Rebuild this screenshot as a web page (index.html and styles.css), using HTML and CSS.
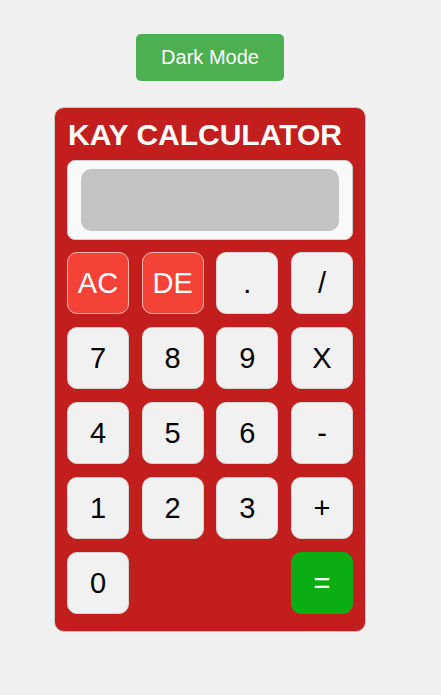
FILE: index.html
```html
<!DOCTYPE html>
<html>
<head>
<meta charset="utf-8">
<link rel="stylesheet" href="styles.css">
</head>
<body>
<div class="page">
  <button class="mode-btn">Dark Mode</button>
  <div class="calculator">
    <h1 class="title">KAY CALCULATOR</h1>
    <div class="display"><div class="screen"></div></div>
    <div class="keys">
      <button class="key key-red">AC</button>
      <button class="key key-red">DE</button>
      <button class="key">.</button>
      <button class="key">/</button>
      <button class="key">7</button>
      <button class="key">8</button>
      <button class="key">9</button>
      <button class="key">X</button>
      <button class="key">4</button>
      <button class="key">5</button>
      <button class="key">6</button>
      <button class="key">-</button>
      <button class="key">1</button>
      <button class="key">2</button>
      <button class="key">3</button>
      <button class="key">+</button>
      <button class="key">0</button>
      <button class="key key-eq">=</button>
    </div>
  </div>
</div>
</body>
</html>
```

FILE: styles.css
```css
html, body {
  margin: 0;
  padding: 0;
  background: #f0f0f0;
  font-family: "Liberation Sans", Arial, sans-serif;
}
.page {
  width: 420px;
  display: flex;
  flex-direction: column;
  align-items: center;
  padding-top: 34px;
}
.mode-btn {
  background: #4caf50;
  color: #fff;
  border: none;
  border-radius: 5px;
  font-family: "Liberation Sans", Arial, sans-serif;
  font-size: 20px;
  line-height: 23px;
  padding: 12px 25px;
  width: 148px;
  height: 47px;
  margin: 0 0 26px 0;
}
.calculator {
  width: 312px;
  box-sizing: border-box;
  background: #c21e1e;
  border: 1px solid #c9c9c9;
  border-radius: 10px;
  padding: 10px 12px 17px 12px;
}
.title {
  margin: 0 0 9px 1px;
  color: #fff;
  font-size: 30px;
  line-height: 33px;
  font-weight: bold;
}
.display {
  height: 80px;
  box-sizing: border-box;
  background: #f9f9f9;
  border: 1px solid #d0d0d0;
  border-radius: 8px;
  padding: 8px 13px;
  margin-bottom: 12px;
}
.screen {
  height: 62px;
  background: #c3c3c3;
  border-radius: 10px;
}
.keys {
  display: grid;
  grid-template-columns: repeat(4, 62px);
  justify-content: space-between;
  row-gap: 13px;
}
.key {
  height: 62px;
  background: #f1f1f1;
  border: 1px solid #d4d4d4;
  border-radius: 10px;
  font-family: "Liberation Sans", Arial, sans-serif;
  font-size: 29px;
  color: #000;
  padding: 0;
}
.key-red {
  background: #f44336;
  color: #fff;
  border-color: #f3b6b0;
}
.key-eq {
  grid-column: 4;
  background: #0aae14;
  border-color: #0aae14;
  color: #fff;
}
```
